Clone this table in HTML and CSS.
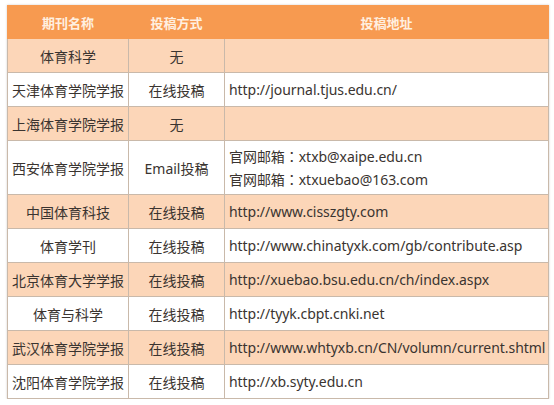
FILE: index.html
```html
<!DOCTYPE html>
<html lang="zh">
<head>
<meta charset="utf-8">
<link rel="stylesheet" href="styles.css">
</head>
<body>
<table class="journals">
  <colgroup><col class="c1"><col class="c2"><col class="c3"></colgroup>
  <thead>
    <tr class="head"><th>期刊名称</th><th>投稿方式</th><th>投稿地址</th></tr>
  </thead>
  <tbody>
    <tr class="peach"><td class="name">体育科学</td><td class="way">无</td><td class="addr"></td></tr>
    <tr class="white"><td class="name">天津体育学院学报</td><td class="way">在线投稿</td><td class="addr">http://journal.tjus.edu.cn/</td></tr>
    <tr class="peach"><td class="name">上海体育学院学报</td><td class="way">无</td><td class="addr"></td></tr>
    <tr class="white tall"><td class="name">西安体育学院学报</td><td class="way">Email投稿</td><td class="addr"><div>官网邮箱<span class="colon" lang="zh-Hant">：</span>xtxb@xaipe.edu.cn</div><div>官网邮箱<span class="colon" lang="zh-Hant">：</span>xtxuebao@163.com</div></td></tr>
    <tr class="peach"><td class="name">中国体育科技</td><td class="way">在线投稿</td><td class="addr">http://www.cisszgty.com</td></tr>
    <tr class="white"><td class="name">体育学刊</td><td class="way">在线投稿</td><td class="addr">http://www.chinatyxk.com/gb/contribute.asp</td></tr>
    <tr class="peach"><td class="name">北京体育大学学报</td><td class="way">在线投稿</td><td class="addr">http://xuebao.bsu.edu.cn/ch/index.aspx</td></tr>
    <tr class="white"><td class="name">体育与科学</td><td class="way">在线投稿</td><td class="addr">http://tyyk.cbpt.cnki.net</td></tr>
    <tr class="peach"><td class="name">武汉体育学院学报</td><td class="way">在线投稿</td><td class="addr">http://www.whtyxb.cn/CN/volumn/current.shtml</td></tr>
    <tr class="white"><td class="name">沈阳体育学院学报</td><td class="way">在线投稿</td><td class="addr">http://xb.syty.edu.cn</td></tr>
  </tbody>
</table>
</body>
</html>
```
FILE: styles.css
```css
html, body {
  margin: 0;
  padding: 0;
  background: #ffffff;
}
body {
  padding: 5px 6px 0 7px;
  font-family: "Noto Sans", "Noto Sans CJK SC", sans-serif;
  color: #3a3430;
}
.journals {
  border-collapse: collapse;
  width: 541px;
  table-layout: fixed;
  box-shadow: 0 0 2px rgba(120, 110, 100, 0.35);
}
.c1 { width: 121px; }
.c2 { width: 96px; }
.c3 { width: 324px; }
.journals th,
.journals td {
  border: 1px solid #c9b9aa;
  padding: 0;
  white-space: nowrap;
  overflow: hidden;
}
.head th {
  height: 32px;
  background: #f79a50;
  color: #fff0e0;
  font-family: "Noto Sans CJK SC", sans-serif;
  font-size: 13px;
  font-weight: bold;
  text-align: center;
  border-color: #f79a50;
}
.journals td {
  height: 33px;
  font-size: 14px;
}
.tall td {
  height: 53px;
}
.peach td { background: #fcd6b8; }
.white td { background: #ffffff; }
.name {
  text-align: center;
  font-family: "Noto Sans CJK SC", sans-serif;
  font-size: 15px;
}
.way {
  text-align: center;
  font-family: "Noto Sans", "Noto Sans CJK SC", sans-serif;
}
.addr {
  padding-left: 4px !important;
  text-align: left;
  line-height: 22px;
  letter-spacing: -0.05px;
}
.colon {
  font-family: "Noto Sans CJK TC", sans-serif;
}
```
